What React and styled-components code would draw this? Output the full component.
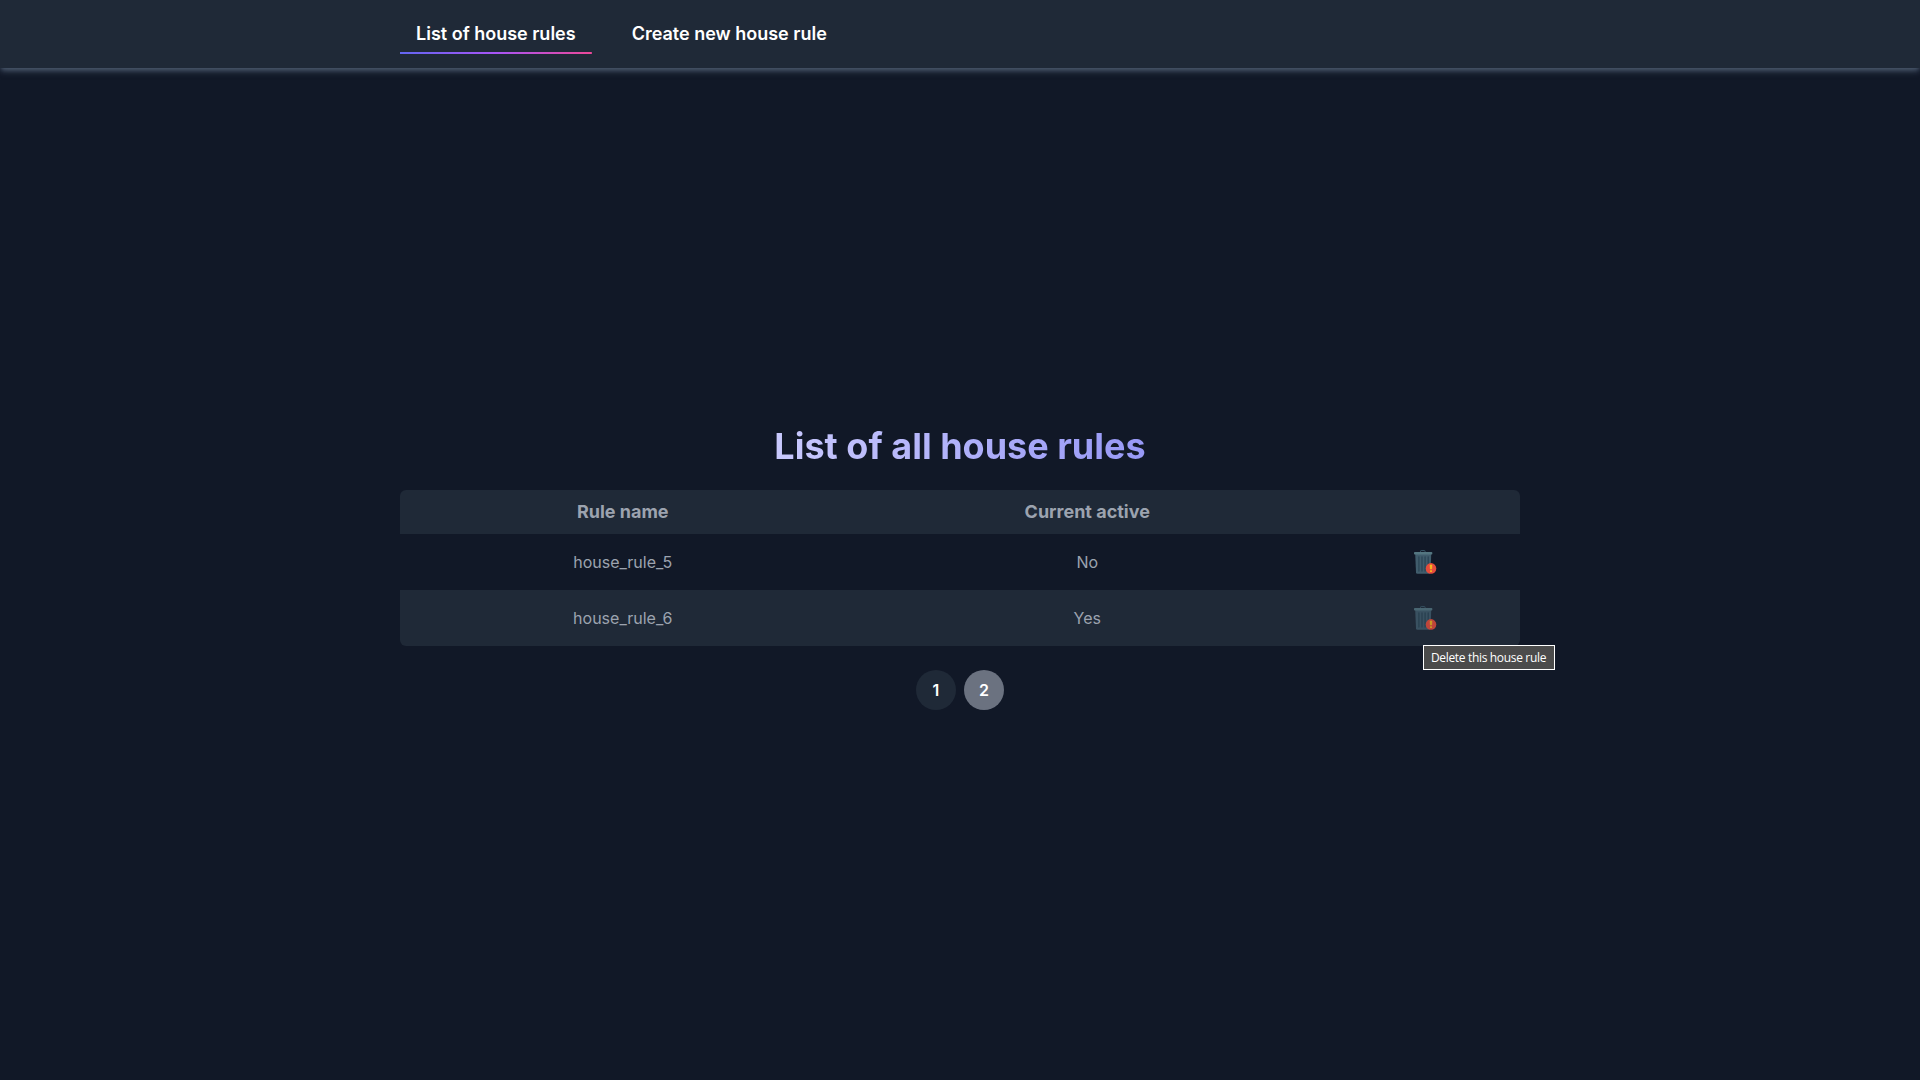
import React from "react";
import styled, { createGlobalStyle } from "styled-components";

const GlobalStyle = createGlobalStyle`
  * { box-sizing: border-box; }
  body {
    margin: 0;
    background: #111827;
    color: #fff;
    font-family: Inter, "Liberation Sans", sans-serif;
    font-size: 16px;
    line-height: 24px;
  }
`;

const Page = styled.div`
  min-height: 100vh;
  display: flex;
  flex-direction: column;
`;

const Header = styled.header`
  height: 68px;
  background: #1f2937;
  box-shadow: 0 4px 6px -1px #475569, 0 2px 4px -2px #475569;
`;

const Nav = styled.nav`
  width: 1120px;
  height: 100%;
  margin: 0 auto;
  padding-top: 14px;
  display: flex;
  align-items: flex-start;
  gap: 24px;
`;

const NavLink = styled.a`
  height: 40px;
  padding: 6px 16px;
  font-size: 18px;
  line-height: 28px;
  font-weight: 600;
  white-space: nowrap;
  background: ${(p) =>
    p.$active
      ? "linear-gradient(to right, #6366f1, #a855f7, #ec4899) bottom / 100% 2px no-repeat"
      : "none"};
`;

const Main = styled.main`
  flex: 1;
  display: flex;
  flex-direction: column;
  align-items: center;
  justify-content: center;
  gap: 24px;
  padding-bottom: 12px;
`;

const Title = styled.h1`
  margin: 0;
  font-size: 36px;
  line-height: 40px;
  font-weight: 700;
  background: linear-gradient(to right, #c9c9fd, #9798f6);
  background-clip: text;
  color: transparent;
`;

const Table = styled.div`
  width: 1120px;
  border-radius: 6px;
  color: #9ca3af;
`;

const Row = styled.div`
  display: grid;
  grid-template-columns: 445.5px 483.5px 191px;
  align-items: center;
  justify-items: center;
  height: 56px;
  background: ${(p) => (p.$striped ? "#1f2937" : "transparent")};
  &:last-child { border-radius: 0 0 6px 6px; }
`;

const HeadRow = styled(Row)`
  height: 44px;
  background: #1f2937;
  border-radius: 6px 6px 0 0;
  font-size: 18px;
  line-height: 28px;
  font-weight: 700;
`;

const DeleteButton = styled.button`
  position: relative;
  display: flex;
  padding: 0;
  border: 0;
  background: none;
`;

const BinIcon = styled.svg`
  width: 24px;
  height: 24px;
  opacity: ${(p) => (p.$dimmed ? 0.8 : 1)};
`;

const Tooltip = styled.span`
  position: absolute;
  top: 39px;
  left: 10px;
  z-index: 1;
  width: 132px;
  height: 25px;
  border: 1px solid #fff;
  background: #4b4b4b;
  color: #fff;
  font: 12px/24px "Open Sans", "Noto Sans", sans-serif;
  letter-spacing: -0.33px;
  text-align: center;
  white-space: nowrap;
`;

const Pagination = styled.div`
  display: flex;
  gap: 8px;
`;

const PageButton = styled.button`
  width: 40px;
  height: 40px;
  padding: 0;
  border: 0;
  border-radius: 50%;
  background: ${(p) => (p.$current ? "#6b7280" : "#1f2937")};
  color: #fff;
  font: 600 16px/24px Inter, "Liberation Sans", sans-serif;
`;

const rules = [
  { name: "house_rule_5", active: "No" },
  { name: "house_rule_6", active: "Yes", hovered: true },
];

function Bin({ dimmed }) {
  return (
    <BinIcon viewBox="0 0 24 24" $dimmed={dimmed}>
      <path d="M7.5 2.3V1.3Q7.5.6 8.2.6h3.2q.7 0 .7.7v1" fill="none" stroke="#406070" strokeWidth="0.9" />
      <path d="M2.2 4h16l-.6 18.4q-.1 1.3-1.4 1.3H4.4q-1.3 0-1.4-1.3z" fill="#405c6c" />
      <path d="M5.9 7v14M9 7v14M12.1 7v14M15.2 7v9" stroke="#2b4556" strokeWidth="1.3" strokeLinecap="round" />
      <rect x="1" y="2" width="18.3" height="2.6" rx="0.8" fill="#547681" />
      <circle cx="18" cy="18.4" r="5.3" fill="#e64c3c" />
      <path d="M17.1 15h1.8l-.3 4h-1.2z" fill="#f6c51b" stroke="#f6c51b" strokeWidth="0.6" />
      <rect x="17" y="20.2" width="2" height="1.8" rx="0.7" fill="#f6c51b" />
    </BinIcon>
  );
}

export default function App() {
  return (
    <Page>
      <GlobalStyle />
      <Header>
        <Nav>
          <NavLink $active>List of house rules</NavLink>
          <NavLink>Create new house rule</NavLink>
        </Nav>
      </Header>
      <Main>
        <Title>List of all house rules</Title>
        <Table>
          <HeadRow>
            <span>Rule name</span>
            <span>Current active</span>
          </HeadRow>
          {rules.map((rule) => (
            <Row key={rule.name} $striped={rule.hovered}>
              <span>{rule.name}</span>
              <span>{rule.active}</span>
              <DeleteButton>
                <Bin dimmed={rule.hovered} />
                {rule.hovered && <Tooltip>Delete this house rule</Tooltip>}
              </DeleteButton>
            </Row>
          ))}
        </Table>
        <Pagination>
          <PageButton>1</PageButton>
          <PageButton $current>2</PageButton>
        </Pagination>
      </Main>
    </Page>
  );
}
